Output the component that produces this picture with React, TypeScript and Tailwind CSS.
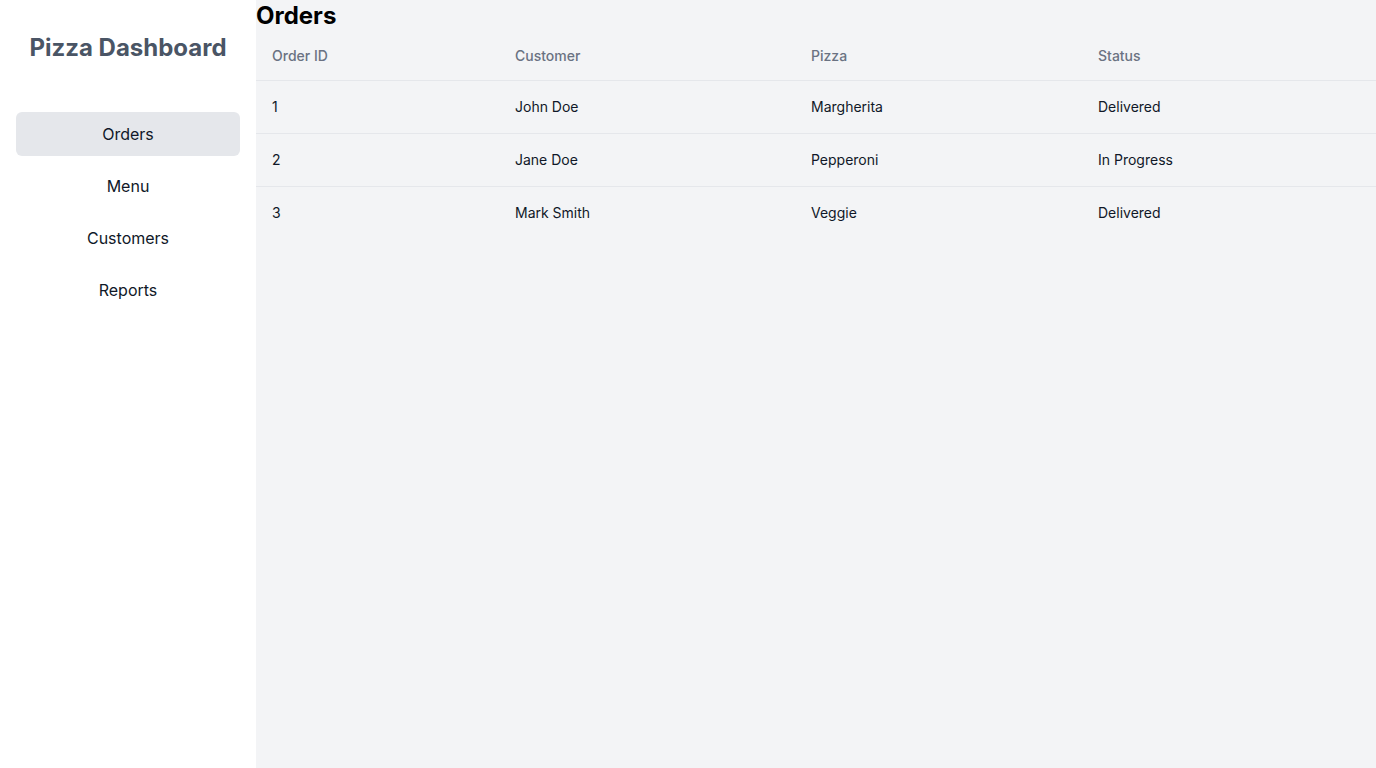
const orders = [
  { id: 1, customer: "John Doe", pizza: "Margherita", status: "Delivered" },
  { id: 2, customer: "Jane Doe", pizza: "Pepperoni", status: "In Progress" },
  { id: 3, customer: "Mark Smith", pizza: "Veggie", status: "Delivered" },
]

const navItems = ["Orders", "Menu", "Customers", "Reports"]

export default function App() {
  return (
    <div className="flex min-h-screen font-['Inter',sans-serif] text-gray-900">
      {/* Sidebar */}
      <aside className="w-64 shrink-0 bg-white px-4">
        <h1 className="pt-8 text-center text-2xl leading-8 font-bold text-gray-600">
          Pizza Dashboard
        </h1>
        <nav className="mt-12 flex flex-col gap-2">
          {navItems.map((item, i) => (
            <a
              key={item}
              href="#"
              className={
                i === 0
                  ? "block rounded-md bg-gray-200 py-2.5 text-center text-base"
                  : "block rounded-md py-2.5 text-center text-base"
              }
            >
              {item}
            </a>
          ))}
        </nav>
      </aside>

      {/* Main */}
      <main className="flex-1 bg-gray-100">
        <h2 className="text-2xl leading-8 font-bold text-black">Orders</h2>
        <table className="w-full table-fixed text-left text-sm">
          <thead>
            <tr className="border-b border-gray-200">
              <th className="w-[243px] px-4 py-[14px] font-medium text-gray-500">Order ID</th>
              <th className="w-[296px] px-4 py-[14px] font-medium text-gray-500">Customer</th>
              <th className="w-[287px] px-4 py-[14px] font-medium text-gray-500">Pizza</th>
              <th className="px-4 py-[14px] font-medium text-gray-500">Status</th>
            </tr>
          </thead>
          <tbody>
            {orders.map((o) => (
              <tr key={o.id} className="border-b border-gray-200 last:border-b-0">
                <td className="px-4 py-4">{o.id}</td>
                <td className="px-4 py-4">{o.customer}</td>
                <td className="px-4 py-4">{o.pizza}</td>
                <td className="px-4 py-4">{o.status}</td>
              </tr>
            ))}
          </tbody>
        </table>
      </main>
    </div>
  )
}
